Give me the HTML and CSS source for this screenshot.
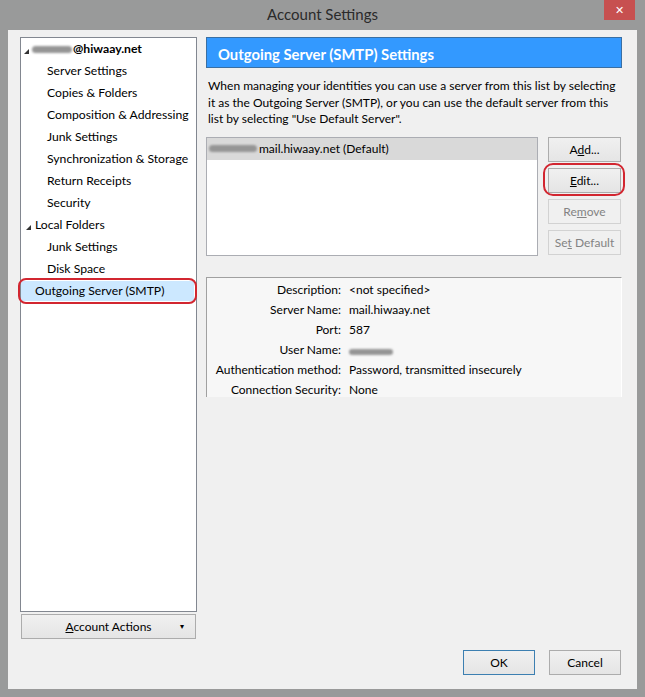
FILE: index.html
```html
<!DOCTYPE html>
<html>
<head>
<meta charset="utf-8">
<link rel="stylesheet" href="styles.css">
</head>
<body>
<div class="window">
  <div class="titlebar">
    <div class="title">Account Settings</div>
    <div class="close">✕</div>
  </div>
  <div class="client">
    <div class="main">
      <div class="leftcol">
        <div class="tree">
          <div class="item account"><span class="twisty"></span><span class="blur b1"></span>@hiwaay.net</div>
          <div class="item child">Server Settings</div>
          <div class="item child">Copies &amp; Folders</div>
          <div class="item child">Composition &amp; Addressing</div>
          <div class="item child">Junk Settings</div>
          <div class="item child">Synchronization &amp; Storage</div>
          <div class="item child">Return Receipts</div>
          <div class="item child">Security</div>
          <div class="item top"><span class="twisty"></span>Local Folders</div>
          <div class="item child">Junk Settings</div>
          <div class="item child">Disk Space</div>
          <div class="item top selected">Outgoing Server (SMTP)</div>
        </div>
        <div class="btn actions"><span><u>A</u>ccount Actions</span><span class="arrow">▾</span></div>
      </div>
      <div class="rightcol">
        <div class="heading">Outgoing Server (SMTP) Settings</div>
        <p class="desc">When managing your identities you can use a server from this list by selecting it as the Outgoing Server (SMTP), or you can use the default server from this list by selecting "Use Default Server".</p>
        <div class="listarea">
          <div class="list">
            <div class="row"><span class="blur b2"></span>mail.hiwaay.net (Default)</div>
          </div>
          <div class="listbtns">
            <div class="btn"><span>A<u>d</u>d...</span></div>
            <div class="btn marked"><span><u>E</u>dit...</span></div>
            <div class="btn disabled"><span>Re<u>m</u>ove</span></div>
            <div class="btn disabled"><span>Se<u>t</u> Default</span></div>
          </div>
        </div>
        <div class="details">
          <div class="lab">Description:</div><div class="val">&lt;not specified&gt;</div>
          <div class="lab">Server Name:</div><div class="val">mail.hiwaay.net</div>
          <div class="lab">Port:</div><div class="val">587</div>
          <div class="lab">User Name:</div><div class="val"><span class="blur b3"></span></div>
          <div class="lab">Authentication method:</div><div class="val">Password, transmitted insecurely</div>
          <div class="lab">Connection Security:</div><div class="val">None</div>
        </div>
      </div>
    </div>
    <div class="dialogbtns">
      <div class="btn default">OK</div>
      <div class="btn">Cancel</div>
    </div>
  </div>
</div>
</body>
</html>
```
FILE: styles.css
```css
html, body {
  margin: 0;
  padding: 0;
}
body {
  width: 645px;
  height: 697px;
  background: #999a9a;
  font-family: Lato, "Noto Sans", sans-serif;
  font-size: 12px;
  color: #000;
  overflow: hidden;
}
.window {
  display: flex;
  flex-direction: column;
  height: 697px;
}
.titlebar {
  height: 30px;
  display: flex;
  justify-content: center;
  align-items: center;
  position: relative;
}
.title {
  font-size: 15px;
  color: #2a2a2a;
  margin-top: -2px;
}
.close {
  position: absolute;
  right: 10px;
  top: 0;
  width: 31px;
  height: 20px;
  background: #c75050;
  color: #fff;
  font-size: 11px;
  font-weight: bold;
  display: flex;
  align-items: center;
  justify-content: center;
  font-family: "DejaVu Sans", sans-serif;
}
.client {
  margin: 0 8px 8px 8px;
  height: 659px;
  box-sizing: border-box;
  background: #f0f0f0;
  padding: 7px 15px 14px 12px;
  display: flex;
  flex-direction: column;
}
.main {
  display: flex;
  gap: 9px;
  height: 602px;
}
.leftcol {
  width: 177px;
  display: flex;
  flex-direction: column;
  gap: 2px;
}
.tree {
  height: 575px;
  box-sizing: border-box;
  background: #fff;
  border: 1px solid #828790;
  font-size: 12.2px;
}
.item {
  height: 22px;
  line-height: 22px;
  white-space: nowrap;
  position: relative;
  display: flex;
  align-items: center;
}
.item.account {
  font-weight: bold;
  padding-left: 3px;
}
.item.child {
  padding-left: 26px;
}
.item.top {
  padding-left: 14px;
}
.item.top .twisty {
  position: absolute;
  left: 5px;
}
.twisty {
  width: 0;
  height: 0;
  border-left: 5px solid transparent;
  border-bottom: 5px solid #333;
  margin-right: 3px;
  margin-top: 4px;
}
.item.selected {
  background: #cce8ff;
  margin: 0 2px 0 0;
  height: 20px;
  line-height: 20px;
  margin-top: 1px;
}
.item.selected::after {
  content: "";
  position: absolute;
  left: -3px;
  right: -3px;
  top: -3px;
  bottom: -3px;
  border: 2px solid #d22630;
  border-radius: 8px;
}
.blur {
  display: inline-block;
  background: #959595;
  border-radius: 4px;
  filter: blur(1.2px);
}
.b1 {
  width: 40px;
  height: 7px;
  margin-right: 1px;
}
.b2 {
  width: 48px;
  height: 7px;
  margin: 0 2px 0 2px;
}
.b3 {
  width: 44px;
  height: 6px;
  margin-top: 5px;
}
.btn {
  box-sizing: border-box;
  height: 25px;
  border: 1px solid #acacac;
  background: linear-gradient(#f0f0f0, #e5e5e5);
  display: flex;
  align-items: center;
  justify-content: center;
  color: #000;
  position: relative;
  white-space: nowrap;
}
.btn.disabled {
  color: #838383;
  border-color: #d2d2d2;
  background: #f0f0f0;
}
.btn.marked::after {
  content: "";
  position: absolute;
  left: -6px;
  right: -5px;
  top: -6px;
  bottom: -4px;
  border: 2px solid #d22630;
  border-radius: 10px;
}
.actions {
  width: 175px;
  margin-left: 1px;
  position: relative;
}
.actions .arrow {
  position: absolute;
  right: 11px;
  top: 7px;
  font-size: 8px;
  font-family: "DejaVu Sans", sans-serif;
}
.rightcol {
  width: 416px;
  display: flex;
  flex-direction: column;
}
.heading {
  height: 31px;
  box-sizing: border-box;
  background: #3399ff;
  border: 1px solid #3a6fa3;
  color: #fff;
  font-weight: bold;
  font-size: 14.8px;
  padding-left: 11px;
  padding-top: 3px;
  display: flex;
  align-items: center;
}
.desc {
  margin: 10px 0 0 2px;
  line-height: 16.5px;
}
.listarea {
  display: flex;
  gap: 10px;
  margin-top: 9px;
  height: 119px;
}
.list {
  width: 332px;
  box-sizing: border-box;
  background: #fff;
  border: 1px solid #abadb3;
}
.row {
  height: 22px;
  background: #d9d9d9;
  display: flex;
  align-items: center;
}
.listbtns {
  width: 73px;
  display: flex;
  flex-direction: column;
  gap: 6px;
}
.details {
  margin-top: 21px;
  height: 120px;
  box-sizing: border-box;
  background: #f7f7f7;
  border-top: 1px solid #a0a0a0;
  border-left: 1px solid #a0a0a0;
  border-right: 1px solid #fff;
  display: grid;
  grid-template-columns: 134px 1fr;
  column-gap: 8px;
  grid-auto-rows: 20px;
  padding-top: 2px;
  align-items: center;
}
.lab {
  text-align: right;
}
.val {
  display: flex;
  align-items: center;
}
.dialogbtns {
  margin-top: 11px;
  display: flex;
  justify-content: flex-end;
  gap: 14px;
  padding-right: 1px;
}
.dialogbtns .btn {
  width: 72px;
}
.dialogbtns .btn.default {
  border-color: #3c7fb1;
}
```
